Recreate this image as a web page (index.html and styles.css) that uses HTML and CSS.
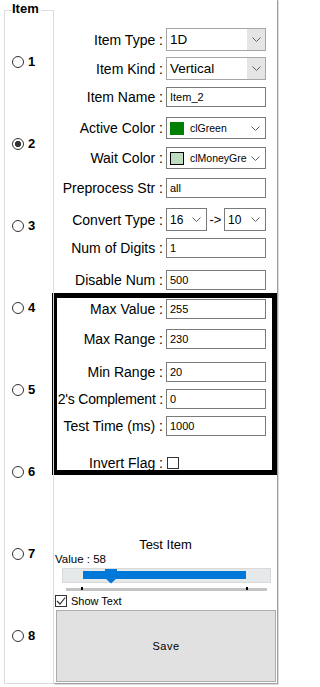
FILE: index.html
```html
<!DOCTYPE html>
<html>
<head>
<meta charset="utf-8">
<title>Item</title>
<link rel="stylesheet" href="styles.css">
</head>
<body>
<div class="app">
  <div class="group">
    <div class="legend">Item</div>
    <ul class="radios">
      <li class="radio"><span class="dot"></span><span class="num">1</span></li>
      <li class="radio"><span class="dot on"></span><span class="num">2</span></li>
      <li class="radio"><span class="dot"></span><span class="num">3</span></li>
      <li class="radio"><span class="dot"></span><span class="num">4</span></li>
      <li class="radio"><span class="dot"></span><span class="num">5</span></li>
      <li class="radio"><span class="dot"></span><span class="num">6</span></li>
      <li class="radio"><span class="dot"></span><span class="num">7</span></li>
      <li class="radio"><span class="dot"></span><span class="num">8</span></li>
    </ul>
  </div>

  <div class="panel">
    <div class="form">
      <div class="row"><span class="lbl">Item Type :</span>
        <div class="combo drop"><span class="val">1D</span><span class="btn"><svg class="chev" width="9" height="5" viewBox="0 0 9 5"><path d="M0.5 0.5 L4.5 4.5 L8.5 0.5"/></svg></span></div></div>
      <div class="row"><span class="lbl">Item Kind :</span>
        <div class="combo drop"><span class="val">Vertical</span><span class="btn"><svg class="chev" width="9" height="5" viewBox="0 0 9 5"><path d="M0.5 0.5 L4.5 4.5 L8.5 0.5"/></svg></span></div></div>
      <div class="row"><span class="lbl">Item Name :</span><div class="edit">Item_2</div></div>
      <div class="row"><span class="lbl">Active Color :</span>
        <div class="combo color"><span class="swatch green"></span><span class="val">clGreen</span><svg class="chev" width="9" height="5" viewBox="0 0 9 5"><path d="M0.5 0.5 L4.5 4.5 L8.5 0.5"/></svg></div></div>
      <div class="row"><span class="lbl">Wait Color :</span>
        <div class="combo color"><span class="swatch money"></span><span class="val">clMoneyGre</span><svg class="chev" width="9" height="5" viewBox="0 0 9 5"><path d="M0.5 0.5 L4.5 4.5 L8.5 0.5"/></svg></div></div>
      <div class="row"><span class="lbl">Preprocess Str :</span><div class="edit">all</div></div>
      <div class="row"><span class="lbl">Convert Type :</span>
        <div class="convert">
          <div class="combo small"><span class="val">16</span><svg class="chev" width="9" height="5" viewBox="0 0 9 5"><path d="M0.5 0.5 L4.5 4.5 L8.5 0.5"/></svg></div>
          <span class="arrow">-&gt;</span>
          <div class="combo small wide"><span class="val">10</span><svg class="chev" width="9" height="5" viewBox="0 0 9 5"><path d="M0.5 0.5 L4.5 4.5 L8.5 0.5"/></svg></div>
        </div></div>
      <div class="row"><span class="lbl">Num of Digits :</span><div class="edit">1</div></div>
      <div class="row"><span class="lbl">Disable Num :</span><div class="edit">500</div></div>
    </div>

    <div class="frame">
      <div class="row"><span class="lbl">Max Value :</span><div class="edit">255</div></div>
      <div class="row"><span class="lbl">Max Range :</span><div class="edit">230</div></div>
      <div class="row"><span class="lbl">Min Range :</span><div class="edit">20</div></div>
      <div class="row"><span class="lbl tight">2's Complement :</span><div class="edit">0</div></div>
      <div class="row"><span class="lbl">Test Time (ms) :</span><div class="edit">1000</div></div>
      <div class="row"><span class="lbl">Invert Flag :</span><div class="ctl"><span class="box"></span></div></div>
    </div>

    <div class="test">
      <div class="test-title">Test Item</div>
      <div class="value">Value : 58</div>
      <div class="slider">
        <div class="sel"></div>
        <svg class="thumb" width="12" height="15" viewBox="0 0 12 15"><polygon points="0,0 12,0 12,9 6,14.5 0,9"/></svg>
      </div>
      <div class="ticks"><span class="tick tick-min"></span><span class="tick tick-max"></span></div>
      <div class="check"><span class="box"><svg width="10" height="10" viewBox="0 0 10 10"><path d="M1 5 L4 8 L9.2 1.5"/></svg></span><span class="check-text">Show Text</span></div>
      <div class="save">Save</div>
    </div>
  </div>
</div>
</body>
</html>
```

FILE: styles.css
```css
html, body {
  margin: 0;
  padding: 0;
  background: #ffffff;
}

body {
  font-family: "Liberation Sans", Arial, sans-serif;
  color: #000;
  width: 283px;
  height: 687px;
  overflow: hidden;
}

.app {
  display: flex;
  align-items: flex-start;
  width: 283px;
  height: 687px;
}

/* ---------- left group box ---------- */
.group {
  position: relative;
  box-sizing: border-box;
  width: 50px;
  height: 674px;
  margin: 10px 0 0 4px;
  border: 1px solid #dcdcdc;
}

.legend {
  position: absolute;
  top: -10px;
  left: 7px;
  padding-right: 2px;
  background: #fff;
  font-weight: bold;
  font-size: 13px;
  line-height: 16px;
}

.radios {
  list-style: none;
  margin: 0;
  padding: 10px 0 0 7px;
}

.radio {
  display: flex;
  align-items: center;
  gap: 4px;
  height: 82px;
}

.dot {
  box-sizing: border-box;
  width: 12px;
  height: 12px;
  border: 1px solid #333;
  border-radius: 50%;
  background: #fff;
}

.dot.on {
  background: radial-gradient(circle, #333 0 2.8px, #fff 3.4px);
}

.num {
  font-weight: bold;
  font-size: 13px;
  line-height: 16px;
}

/* ---------- right panel ---------- */
.panel {
  box-sizing: border-box;
  width: 224px;
  height: 684px;
  border-right: 1px solid #a0a0a0;
  border-bottom: 1px solid #a0a0a0;
  box-shadow: 1px 1px 0 #dcdcdc;
}

.form {
  display: grid;
  grid-template-columns: minmax(0, 1fr);
  grid-template-rows: 29px 30px 30px 30px 31px 30px 30px 32px 23px;
  align-items: start;
  padding: 28px 11px 0 0;
}

.row {
  display: flex;
  justify-content: flex-end;
  align-items: center;
  gap: 3px;
  min-width: 0;
}

.lbl {
  font-size: 14px;
  line-height: 16px;
  white-space: nowrap;
}

.lbl.tight {
  letter-spacing: -0.2px;
}

.edit {
  flex: none;
  box-sizing: border-box;
  width: 100px;
  height: 20px;
  border: 1px solid #7a7a7a;
  background: #fff;
  padding-left: 3px;
  font-size: 11px;
  line-height: 18px;
  white-space: nowrap;
}

.combo {
  flex: none;
  display: flex;
  align-items: center;
  box-sizing: border-box;
  width: 100px;
  height: 22px;
  border: 1px solid #7a7a7a;
  background: #fff;
  padding-left: 3px;
}

.combo .val {
  flex: 1;
  overflow: hidden;
  white-space: nowrap;
  font-size: 12px;
  line-height: 16px;
}

.chev {
  display: block;
  flex: none;
  margin-right: 5px;
}

.chev path {
  fill: none;
  stroke: #606060;
  stroke-width: 1;
}

.combo.drop {
  height: 23px;
  border-color: #a6a6a6;
}

.combo.drop .val {
  font-size: 13.5px;
}

.combo.drop .btn {
  align-self: stretch;
  width: 18px;
  display: flex;
  align-items: center;
  justify-content: center;
  background: #e5e5e5;
}

.combo.drop .btn .chev {
  margin: 0;
}

.combo.color .val {
  font-size: 10.5px;
}

.swatch {
  box-sizing: border-box;
  width: 14px;
  height: 13px;
  margin-right: 6px;
  flex: none;
}

.swatch.green {
  background: #008000;
}

.swatch.money {
  background: #c0dcc0;
  border: 1px solid #000;
}

.convert {
  flex: none;
  display: flex;
  align-items: center;
  width: 100px;
}

.combo.small {
  width: 41px;
  height: 23px;
}

.combo.small.wide {
  width: 42px;
}

.arrow {
  flex: 1;
  text-align: center;
  font-size: 13px;
  line-height: 16px;
}

/* ---------- highlighted frame ---------- */
.frame {
  display: grid;
  grid-template-columns: minmax(0, 1fr);
  grid-template-rows: 30px 33px 27px 27px 39px 12px;
  align-items: start;
  margin-left: -2px;
  padding: 1px 6px 3px 0;
  border: 5px solid #000;
}

.ctl {
  flex: none;
  width: 100px;
  height: 12px;
}

.box {
  display: block;
  flex: none;
  box-sizing: border-box;
  width: 12px;
  height: 12px;
  border: 1px solid #333;
  background: #fff;
}

.ctl .box {
  margin-left: 1px;
}

.box svg {
  display: block;
}

.box path {
  fill: none;
  stroke: #333;
  stroke-width: 1.2;
}

/* ---------- test area ---------- */
.test {
  display: flex;
  flex-direction: column;
  align-items: flex-start;
}

.test-title {
  align-self: stretch;
  margin-top: 62px;
  text-align: center;
  font-size: 13px;
  line-height: 16px;
}

.value {
  padding-left: 1px;
  font-size: 11.5px;
  line-height: 13px;
}

.slider {
  position: relative;
  box-sizing: border-box;
  width: 209px;
  height: 15px;
  margin: 2px 0 0 8px;
  padding: 2px 0 0 20px;
  border: 1px solid #d9d9d9;
  background: #e6e9e9;
}

.sel {
  width: 163px;
  height: 8px;
  background: #0078d7;
}

.thumb {
  position: absolute;
  top: 0;
  left: 42px;
  display: block;
}

.thumb polygon {
  fill: #0078d7;
}

.ticks {
  position: relative;
  width: 201px;
  height: 3px;
  margin: 5px 0 0 12px;
  background: #c4c4c4;
}

.tick {
  position: absolute;
  top: -1px;
  width: 2px;
  height: 3px;
  background: #000;
}

.tick-min {
  left: 15px;
}

.tick-max {
  left: 180px;
}

.check {
  display: flex;
  align-items: center;
  gap: 4px;
  height: 14px;
  margin-top: 3px;
  padding-left: 1px;
}

.check-text {
  font-size: 11px;
  line-height: 14px;
}

.save {
  box-sizing: border-box;
  width: 220px;
  height: 72px;
  margin: 2px 1px 0 2px;
  border: 1px solid #adadad;
  background: #e1e1e1;
  display: flex;
  align-items: center;
  justify-content: center;
  font-size: 11px;
  letter-spacing: 0.5px;
}
```
